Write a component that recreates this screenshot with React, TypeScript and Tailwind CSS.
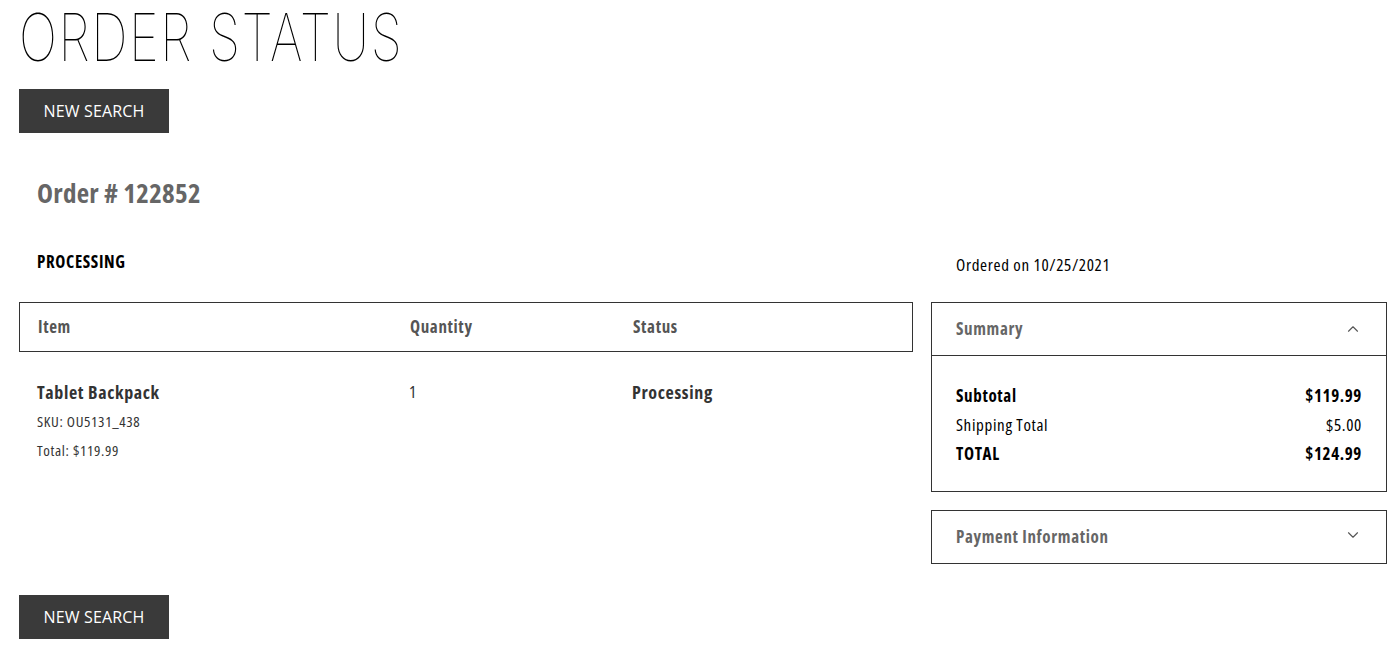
import { ChevronDown, ChevronUp } from "lucide-react";

const SearchButton = () => (
  <button className="h-[44px] w-[150px] bg-[#3a3a3a] text-[16px] tracking-[0.01em] text-white font-stretch-[90%]">
    NEW SEARCH
  </button>
);

export default function App() {
  return (
    <div className="min-h-screen bg-white pl-[19px] pr-[7px] font-['Open_Sans',sans-serif] font-stretch-condensed tracking-[0.04em] text-black">
      <h1 className="w-max origin-left scale-x-[0.77] whitespace-nowrap font-['Inter',sans-serif] text-[66px] font-thin leading-[74px] tracking-[0.03em]">
        ORDER STATUS
      </h1>
      <div className="mt-[15px]">
        <SearchButton />
      </div>

      <h2 className="mt-[44px] pl-[18px] text-[27px] font-bold leading-[32px] tracking-[0.01em] text-[#666]">
        Order # 122852
      </h2>

      <div className="mt-[43px] flex gap-[18px]">
        <div className="w-[894px]">
          <div className="h-[50px] pl-[18px] text-[17px] font-bold leading-[20px]">PROCESSING</div>
          <div className="grid h-[50px] grid-cols-[372px_223px_1fr] items-center border border-[#333] pl-[18px] text-[17px] font-bold text-[#555]">
            <span>Item</span>
            <span>Quantity</span>
            <span>Status</span>
          </div>
          <div className="grid grid-cols-[372px_223px_1fr] pl-[18px] pt-[29px] text-[#333]">
            <div>
              <div className="text-[18px] font-bold leading-[22px]">Tablet Backpack</div>
              <div className="mt-[7px] text-[15px] leading-[22px]">SKU: OU5131_438</div>
              <div className="mt-[7px] text-[15px] leading-[22px]">Total: $119.99</div>
            </div>
            <div className="text-[17px] leading-[22px]">1</div>
            <div className="text-[18px] font-bold leading-[22px]">Processing</div>
          </div>
        </div>

        <div className="w-[456px]">
          <div className="h-[50px] pl-[25px] pt-[3px] text-[17px] leading-[20px]">Ordered on 10/25/2021</div>
          <div className="border border-[#333]">
            <div className="flex h-[53px] items-center justify-between border-b border-[#333] px-[24px] text-[17px] font-bold text-[#666]">
              <span>Summary</span>
              <ChevronUp className="h-[18px] w-[18px] text-[#555]" strokeWidth={1.5} />
            </div>
            <div className="px-[24px] pb-[24px] pt-[25px] text-[17px] leading-[29px]">
              <div className="flex justify-between font-bold">
                <span>Subtotal</span>
                <span>$119.99</span>
              </div>
              <div className="flex justify-between leading-[30px]">
                <span>Shipping Total</span>
                <span>$5.00</span>
              </div>
              <div className="flex justify-between font-bold leading-[27px]">
                <span>TOTAL</span>
                <span>$124.99</span>
              </div>
            </div>
          </div>
          <div className="mt-[18px] flex h-[54px] items-center justify-between border border-[#333] px-[24px] text-[17px] font-bold text-[#666]">
            <span>Payment Information</span>
            <ChevronDown className="-mt-[4px] h-[18px] w-[18px] text-[#555]" strokeWidth={1.5} />
          </div>
        </div>
      </div>

      <div className="mt-[31px] pb-[8px]">
        <SearchButton />
      </div>
    </div>
  );
}
